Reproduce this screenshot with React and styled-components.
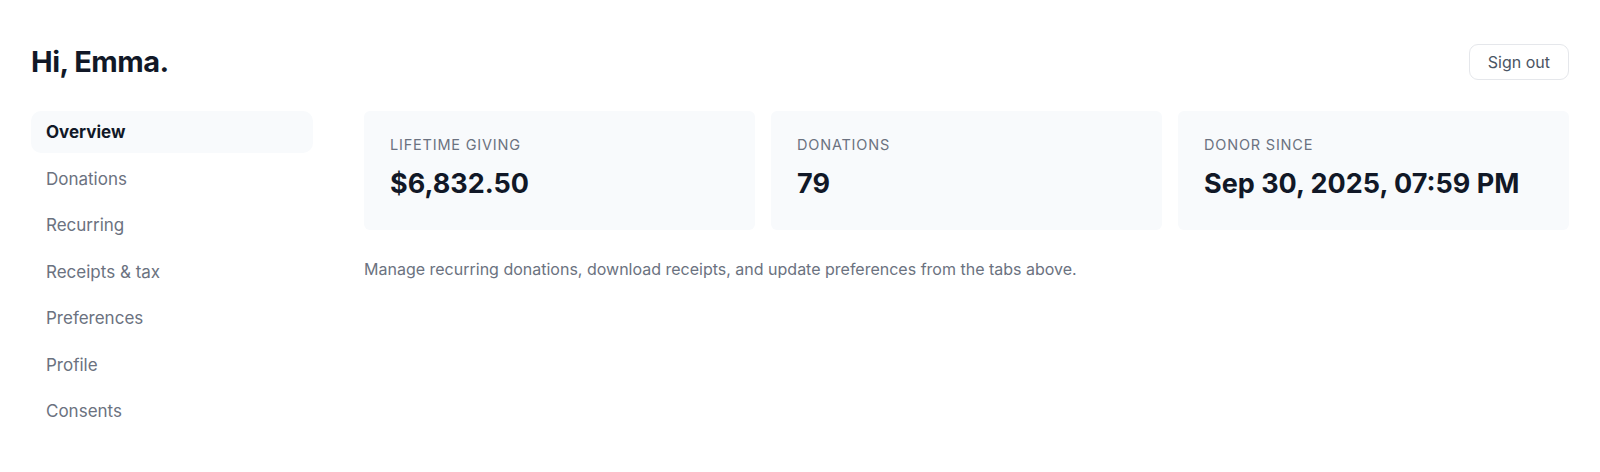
import styled, { createGlobalStyle } from 'styled-components'

const GlobalStyle = createGlobalStyle`
    * {
        box-sizing: border-box;
    }
    body {
        margin: 0;
        background: #ffffff;
        font-family: Inter, "Liberation Sans", sans-serif;
        color: #111827;
    }
`

const Page = styled.div`
    padding: 0 31px 0 31px;
`
const Header = styled.header`
    display: flex;
    align-items: center;
    justify-content: space-between;
    height: 111px;
    padding-top: 12px;
`
const Greeting = styled.h1`
    margin: 0;
    font-size: 29px;
    font-weight: 700;
    letter-spacing: -0.5px;
    color: #111827;
`
const SignOut = styled.button`
    height: 36px;
    padding: 0 18px;
    border: 1px solid #e5e7eb;
    border-radius: 9px;
    background: #ffffff;
    font-family: inherit;
    font-size: 16px;
    color: #4b5563;
    cursor: pointer;
`
const Layout = styled.div`
    display: grid;
    grid-template-columns: 282px 1fr;
    gap: 51px;
`
const Nav = styled.nav`
    display: flex;
    flex-direction: column;
    gap: 4.5px;
`
const NavItem = styled.a`
    display: flex;
    align-items: center;
    height: 42px;
    padding: 0 15px;
    border-radius: 10px;
    font-size: 17px;
    font-weight: ${({ $active }) => ($active ? 700 : 400)};
    color: ${({ $active }) => ($active ? '#111827' : '#6b7280')};
    background: ${({ $active }) => ($active ? '#f8fafc' : 'transparent')};
    text-decoration: none;
`
const Stats = styled.div`
    display: grid;
    grid-template-columns: repeat(3, 1fr);
    gap: 16px;
`
const Card = styled.div`
    height: 119px;
    padding: 24px 26px;
    border-radius: 6px;
    background: #f8fafc;
`
const Label = styled.div`
    font-size: 14.5px;
    letter-spacing: 0.8px;
    text-transform: uppercase;
    color: #6b7280;
    line-height: 20px;
`
const Value = styled.div`
    margin-top: 12px;
    font-size: 27px;
    font-weight: 700;
    line-height: 34px;
    color: #111827;
`
const Note = styled.p`
    margin: 29px 0 0;
    font-size: 16px;
    color: #6b7280;
`

const navItems = ['Overview', 'Donations', 'Recurring', 'Receipts & tax', 'Preferences', 'Profile', 'Consents']

const stats = [
    { label: 'Lifetime giving', value: '$6,832.50' },
    { label: 'Donations', value: '79' },
    { label: 'Donor since', value: 'Sep 30, 2025, 07:59 PM' },
]

const App = () => {
    return (
        <>
            <GlobalStyle />
            <Page>
                <Header>
                    <Greeting>Hi, Emma.</Greeting>
                    <SignOut>Sign out</SignOut>
                </Header>
                <Layout>
                    <Nav>
                        {navItems.map((item, i) => (
                            <NavItem key={item} href="#" $active={i === 0}>
                                {item}
                            </NavItem>
                        ))}
                    </Nav>
                    <main>
                        <Stats>
                            {stats.map((s) => (
                                <Card key={s.label}>
                                    <Label>{s.label}</Label>
                                    <Value>{s.value}</Value>
                                </Card>
                            ))}
                        </Stats>
                        <Note>Manage recurring donations, download receipts, and update preferences from the tabs above.</Note>
                    </main>
                </Layout>
            </Page>
        </>
    )
}

export default App
